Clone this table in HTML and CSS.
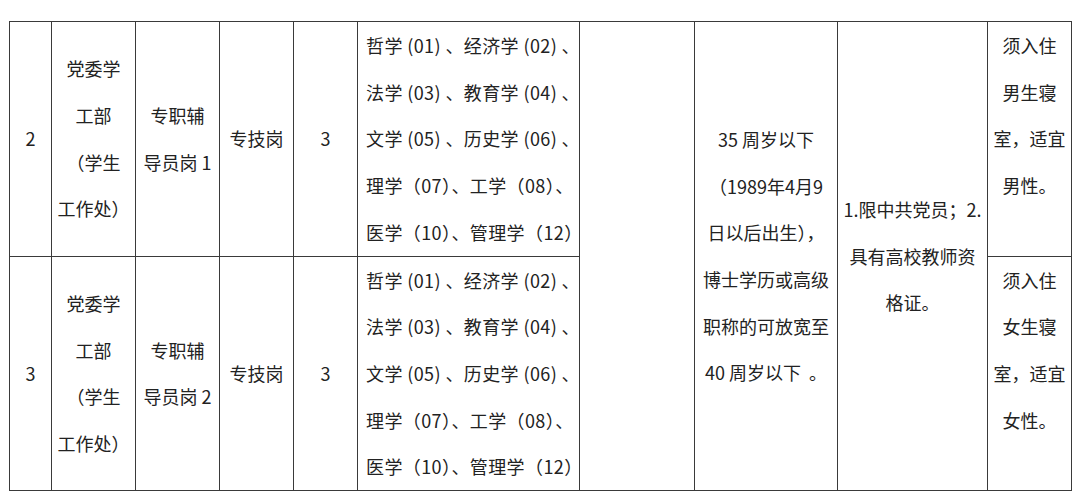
FILE: index.html
```html
<!DOCTYPE html>
<html lang="zh-CN">
<head>
<meta charset="utf-8">
<title>岗位表</title>
<link rel="stylesheet" href="styles.css">
</head>
<body>
<div class="page">
<table class="posts">
  <colgroup>
    <col class="c1"><col class="c2"><col class="c3"><col class="c4"><col class="c5">
    <col class="c6"><col class="c7"><col class="c8"><col class="c9"><col class="c10">
  </colgroup>
  <tbody>
    <tr>
      <td class="mid">2</td>
      <td class="mid">党委学<br>工部<br>（学生<br>工作处）</td>
      <td class="mid">专职辅<br>导员岗 1</td>
      <td class="mid">专技岗</td>
      <td class="mid">3</td>
      <td class="majors">哲学 (01) 、经济学 (02) 、<br>法学 (03) 、教育学 (04) 、<br>文学 (05) 、历史学 (06) 、<br>理学（07）、工学（08）、<br>医学（10）、管理学（12）</td>
      <td rowspan="2" class="mid"></td>
      <td rowspan="2" class="mid">35 周岁以下<br>（1989年4月9<br>日以后出生），<br>博士学历或高级<br>职称的可放宽至<br>40 周岁以下 &nbsp;。</td>
      <td rowspan="2" class="mid">1.限中共党员；2.<br>具有高校教师资<br>格证。</td>
      <td class="top">须入住<br>男生寝<br>室，适宜<br>男性。</td>
    </tr>
    <tr>
      <td class="mid">3</td>
      <td class="mid">党委学<br>工部<br>（学生<br>工作处）</td>
      <td class="mid">专职辅<br>导员岗 2</td>
      <td class="mid">专技岗</td>
      <td class="mid">3</td>
      <td class="majors">哲学 (01) 、经济学 (02) 、<br>法学 (03) 、教育学 (04) 、<br>文学 (05) 、历史学 (06) 、<br>理学（07）、工学（08）、<br>医学（10）、管理学（12）</td>
      <td class="top">须入住<br>女生寝<br>室，适宜<br>女性。</td>
    </tr>
  </tbody>
</table>
</div>
</body>
</html>
```

FILE: styles.css
```css
html, body {
  margin: 0;
  padding: 0;
  background: #ffffff;
}

.page {
  padding: 21px 0 0 9px;
}

.posts {
  border-collapse: collapse;
  table-layout: fixed;
  width: 1063px;
  font-family: "Noto Sans CJK SC", "Noto Sans", sans-serif;
  font-size: 18px;
  color: #222222;
}

.posts tr {
  height: 234px;
}

.posts td {
  border: 1px solid #3a3a3a;
  padding: 0 4px;
  line-height: 46.7px;
  text-align: center;
  white-space: nowrap;
  overflow: visible;
}

.c1 { width: 42px; }
.c2 { width: 84px; }
.c3 { width: 84px; }
.c4 { width: 74px; }
.c5 { width: 64px; }
.c6 { width: 222px; }
.c7 { width: 115px; }
.c8 { width: 143px; }
.c9 { width: 150px; }
.c10 { width: 84px; }

.posts td.mid {
  vertical-align: middle;
}

.posts td.top {
  vertical-align: top;
}

.posts td.majors {
  vertical-align: top;
  text-align: left;
  padding-left: 8px;
  letter-spacing: 0.4px;
}
```
